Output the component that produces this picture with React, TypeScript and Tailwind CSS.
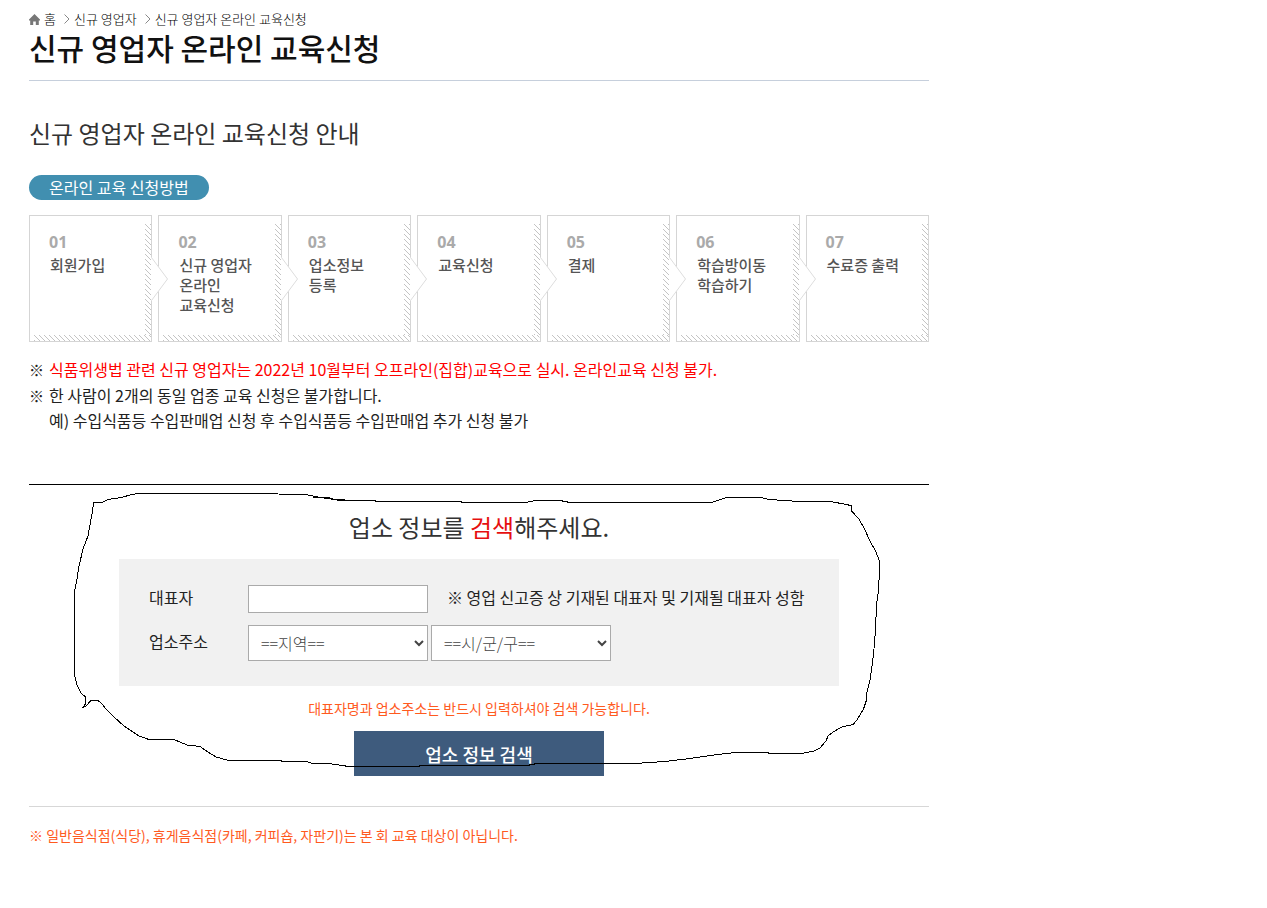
const steps = [
	{ no: "01", lines: ["회원가입"] },
	{ no: "02", lines: ["신규 영업자", "온라인", "교육신청"] },
	{ no: "03", lines: ["업소정보", "등록"] },
	{ no: "04", lines: ["교육신청"] },
	{ no: "05", lines: ["결제"] },
	{ no: "06", lines: ["학습방이동", "학습하기"] },
	{ no: "07", lines: ["수료증 출력"] },
];

function HomeIcon() {
	return (
		<svg width="11" height="11" viewBox="0 0 11 11" fill="#777" aria-hidden="true">
			<path d="M5.5 0 11 5.5V6.5H9.8V11H6.8V7.5H4.2V11H1.2V6.5H0V5.5Z" />
		</svg>
	);
}

function Chevron() {
	return (
		<svg width="6" height="10" viewBox="0 0 6 10" fill="none" stroke="#888" aria-hidden="true">
			<path d="M.5.5 5 5 .5 9.5" />
		</svg>
	);
}

// diagonal shading along the right and bottom edge of a step card
function Hatch({ id, className }: { id: string; className: string }) {
	return (
		<svg className={className} aria-hidden="true">
			<pattern id={id} width="5" height="5" patternUnits="userSpaceOnUse">
				<path
					d="M0 0h1v1h-1ZM1 1h1v1h-1ZM2 2h1v1h-1ZM3 3h1v1h-1ZM4 4h1v1h-1Z"
					fill="#c4c4c4"
					shapeRendering="crispEdges"
				/>
			</pattern>
			<rect width="100%" height="100%" fill={`url(#${id})`} />
		</svg>
	);
}

function Breadcrumb() {
	return (
		<nav
			className="flex h-5 items-center text-[13px] leading-5 font-light text-black"
			aria-label="현재 위치"
		>
			<a href="#" className="flex items-center gap-1">
				<HomeIcon />홈
			</a>
			<span className="mr-1 ml-2">
				<Chevron />
			</span>
			<a href="#">신규 영업자</a>
			<span className="mr-1 ml-2">
				<Chevron />
			</span>
			<a href="#">신규 영업자 온라인 교육신청</a>
		</nav>
	);
}

function Steps() {
	return (
		<ol className="mt-[15px] grid grid-cols-7 gap-1.5">
			{steps.map((step, i) => (
				<li
					key={step.no}
					className="relative h-[127px] border border-[#d5d5d5] bg-white pt-4 pl-[19px]"
				>
					<Hatch
						id={`hatch-right-${step.no}`}
						className="absolute top-2 right-0 h-[111px] w-1.5"
					/>
					<Hatch
						id={`hatch-bottom-${step.no}`}
						className="absolute right-0 bottom-0 h-1.5 w-[calc(100%-4px)]"
					/>
					<p className="font-['Noto_Sans'] text-base leading-5 font-bold text-[#aaa]">
						{step.no}
					</p>
					<p className="mt-[3px] pl-px text-[15px] leading-5 font-medium whitespace-nowrap text-[#555]">
						{step.lines.map((line) => (
							<span key={line} className="block">
								{line}
							</span>
						))}
					</p>
					{i < steps.length - 1 && (
						<svg
							className="absolute top-[41px] -right-[18px] z-10"
							width="18"
							height="44"
							viewBox="0 0 18 44"
							fill="#fff"
							aria-hidden="true"
						>
							<path d="M0 0 17 22 0 44Z" />
							<path d="M.5.5 16.5 22 .5 43.5" fill="none" stroke="#ddd" />
						</svg>
					)}
				</li>
			))}
		</ol>
	);
}

function Notes() {
	return (
		<ul className="mt-[15px] text-base leading-[25px] text-[#222]">
			<li className="mb-px flex">
				<span className="w-5 shrink-0 text-[15px]">※</span>
				<span className="text-[#f00]">
					식품위생법 관련 신규 영업자는 2022년 10월부터 오프라인(집합)교육으로 실시. 온라인교육 신청
					불가.
				</span>
			</li>
			<li className="flex">
				<span className="w-5 shrink-0 text-[15px]">※</span>
				<span>
					한 사람이 2개의 동일 업종 교육 신청은 불가합니다.
					<br />
					예) 수입식품등 수입판매업 신청 후 수입식품등 수입판매업 추가 신청 불가
				</span>
			</li>
		</ul>
	);
}

function Scribble() {
	return (
		<svg
			className="pointer-events-none absolute top-0 left-[44px]"
			width="810"
			height="290"
			viewBox="73 485 810 290"
			fill="none"
			stroke="#000"
			shapeRendering="crispEdges"
			aria-hidden="true"
		>
			<path d="M93.500 502.500H102L108 499.500 121 497.500 132 494.500 138 493.500H250L306 494.500 315 496.500 340 500.500H373L378 501.500H461L462 502.500H525L536 500.500H560L570 502.500H712L726 497.500H761L769 499.500 800 501.500H830L847 504.500 851.500 506V511L859 519 865 530 870 541 876 552 879.500 561V571L878.500 590 876.500 605 875.500 630 873.500 655 870 680 867 692 866.500 700 863.500 709 857 720 853 724.500 842 727 833 732 828 736 826 741 820 748 814 751 802 753.500H770L767 752.500H735L710 755.500 690 758.500 665 761.500 634 763.500 604 763.500H537L527 765.500H420L419 766.500H348L343 765.500 328 763.500H312L307 761.500H282L281 760.500H229L216 757 208 752 200 746.500 187 745 174 739.500H149L139 736 124 726 113 716 106 709 102 704 98 700.500H91L86 706 82.500 707.500 85.500 704V697L81 693 77 685 74.500 675V592L76.500 582 79 566 83 549 88 536 91 519 92.500 511Z" />
			<path d="M313 497.500H328L334 499.500H345" />
		</svg>
	);
}

function SearchForm() {
	return (
		<form
			className="relative border-t border-black pt-6"
			onSubmit={(e) => e.preventDefault()}
		>
			<h3 className="text-center text-2xl leading-9 text-[#333]">
				업소 정보를 <em className="text-[#e60f0f] not-italic">검색</em>해주세요.
			</h3>
			<div className="mx-auto mt-3.5 max-w-[720px] bg-[#f1f1f1] px-[30px] pt-[26px] pb-[25px] text-base text-[#222]">
				<div className="flex h-7 items-start leading-6">
					<label htmlFor="owner" className="w-[99px] shrink-0">
						대표자
					</label>
					<input
						id="owner"
						type="text"
						className="h-7 w-[180px] border border-[#aaa] bg-white px-3"
					/>
					<span className="ml-[19px] whitespace-nowrap">
						※ 영업 신고증 상 기재된 대표자 및 기재될 대표자 성함
					</span>
				</div>
				<div className="mt-3 flex h-9 items-start leading-8">
					<label htmlFor="region" className="w-[99px] shrink-0">
						업소주소
					</label>
					<div className="flex gap-[3px] font-light text-[#444]">
						<select id="region" className="h-9 w-[180px] border border-[#aaa] bg-white px-2">
							<option>==지역==</option>
						</select>
						<select
							aria-label="시/군/구"
							className="h-9 w-[180px] border border-[#aaa] bg-white px-2"
						>
							<option>==시/군/구==</option>
						</select>
					</div>
				</div>
			</div>
			<p className="mt-3 text-center text-sm leading-5 text-[#ff5a1e]">
				대표자명과 업소주소는 반드시 입력하셔야 검색 가능합니다.
			</p>
			<div className="mt-[13px] text-center">
				<button
					type="submit"
					className="h-[45px] w-[250px] bg-[#3e5b7d] text-lg font-medium text-white"
				>
					업소 정보 검색
				</button>
			</div>
			<Scribble />
		</form>
	);
}

export default function App() {
	return (
		<main className="min-h-screen bg-white px-[29px] pt-[9px] pb-14 font-['Noto_Sans_CJK_KR',sans-serif]">
			<div className="max-w-[900px]">
				<Breadcrumb />
				<h1 className="border-b border-[#c6cfdc] pb-[15px] text-[30px] leading-9 font-medium text-[#111]">
					신규 영업자 온라인 교육신청
				</h1>
				<h2 className="mt-[34px] text-2xl leading-9 text-[#333]">
					신규 영업자 온라인 교육신청 안내
				</h2>
				<p className="mt-6 inline-block rounded-full bg-[#418fb0] px-5 pb-px text-base leading-6 text-white">
					온라인 교육 신청방법
				</p>
				<Steps />
				<Notes />
				<div className="mt-[51px] border-b border-[#d7d7d7] pb-[30px]">
					<SearchForm />
				</div>
				<p className="mt-[18px] text-sm leading-5 text-[#ff5a1e]">
					※ 일반음식점(식당), 휴게음식점(카페, 커피숍, 자판기)는 본 회 교육 대상이 아닙니다.
				</p>
			</div>
		</main>
	);
}
